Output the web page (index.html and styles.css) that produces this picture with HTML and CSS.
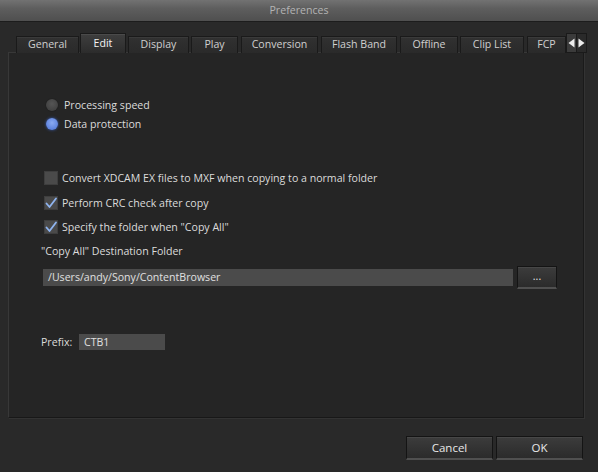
FILE: index.html
```html
<!DOCTYPE html>
<html>
<head>
<meta charset="utf-8">
<link rel="stylesheet" href="styles.css">
</head>
<body>
<div class="window">
  <div class="titlebar">Preferences</div>
  <div class="content">
    <div class="tabs">
      <div class="tab t-general">General</div>
      <div class="tab t-edit active">Edit</div>
      <div class="tab t-display">Display</div>
      <div class="tab t-play">Play</div>
      <div class="tab t-conv">Conversion</div>
      <div class="tab t-flash">Flash Band</div>
      <div class="tab t-off">Offline</div>
      <div class="tab t-clip">Clip List</div>
      <div class="tab t-fcp">FCP</div>
      <div class="arrows">
        <span class="arr"><svg width="7" height="10" viewBox="0 0 7 10"><path d="M6.5 0.5 L0.5 5 L6.5 9.5 Z" fill="#ececec"/></svg></span>
        <span class="arr"><svg width="7" height="10" viewBox="0 0 7 10"><path d="M0.5 0.5 L6.5 5 L0.5 9.5 Z" fill="#ececec"/></svg></span>
      </div>
    </div>
    <div class="panel">
      <div class="radios">
        <div class="row"><span class="radio"></span><span class="lbl">Processing speed</span></div>
        <div class="row"><span class="radio on"></span><span class="lbl">Data protection</span></div>
      </div>
      <div class="checks">
        <div class="row"><span class="cb"></span><span class="lbl">Convert XDCAM EX files to MXF when copying to a normal folder</span></div>
        <div class="row"><span class="cb"><svg width="14" height="14" viewBox="0 0 14 14"><path d="M2.5 7.5 L5.5 11 L12 2.5" fill="none" stroke="#8fb4f0" stroke-width="1.8" stroke-linecap="round" stroke-linejoin="round"/></svg></span><span class="lbl">Perform CRC check after copy</span></div>
        <div class="row"><span class="cb"><svg width="14" height="14" viewBox="0 0 14 14"><path d="M2.5 7.5 L5.5 11 L12 2.5" fill="none" stroke="#8fb4f0" stroke-width="1.8" stroke-linecap="round" stroke-linejoin="round"/></svg></span><span class="lbl">Specify the folder when "Copy All"</span></div>
      </div>
      <div class="dest-label">"Copy All" Destination Folder</div>
      <div class="dest-row">
        <div class="field path">/Users/andy/Sony/ContentBrowser</div>
        <div class="btn dots">...</div>
      </div>
      <div class="prefix-row">
        <span class="plabel">Prefix:</span>
        <div class="field prefix">CTB1</div>
      </div>
    </div>
    <div class="footer">
      <div class="btn big">Cancel</div>
      <div class="btn big">OK</div>
    </div>
  </div>
</div>
</body>
</html>
```

FILE: styles.css
```css
html, body {
  margin: 0;
  padding: 0;
}
body {
  width: 598px;
  height: 472px;
  background: #292929;
  font-family: "Open Sans", "DejaVu Sans", sans-serif;
  font-size: 10.6px;
  color: #dcdcdc;
  overflow: hidden;
}
.window {
  display: flex;
  flex-direction: column;
  height: 472px;
}
.titlebar {
  height: 21px;
  line-height: 21px;
  text-align: center;
  color: #b4b4b4;
  font-size: 10.6px;
  background: linear-gradient(#727272, #5e5e5e 40%, #4f4f4f);
  border-bottom: 1px solid #1c1c1c;
}
.content {
  padding: 0 14px 0 8px;
  display: flex;
  flex-direction: column;
}
.tabs {
  display: flex;
  align-items: flex-end;
  height: 31px;
  padding-left: 8px;
  position: relative;
  z-index: 2;
  margin-bottom: -1px;
}
.tab {
  box-sizing: border-box;
  height: 17px;
  line-height: 15px;
  text-align: center;
  color: #d0d0d0;
  background: linear-gradient(#313131, #2a2a2a);
  border: 1px solid #1a1a1a;
  border-bottom: none;
  box-shadow: inset 0 1px 0 #3a3a3a;
  flex: none;
}
.tab.active {
  height: 20px;
  line-height: 18px;
  color: #f4f4f4;
  background: linear-gradient(#3e3e3e, #2c2c2c);
  box-shadow: inset 0 1px 0 #4a4a4a;
}
.t-general { width: 63px; }
.t-edit { width: 46px; margin-left: 1px; }
.t-display { width: 61px; margin-left: 2px; }
.t-play { width: 47px; margin-left: 2px; }
.t-conv { width: 77px; margin-left: 3px; }
.t-flash { width: 76px; margin-left: 3px; }
.t-off { width: 58px; margin-left: 3px; }
.t-clip { width: 64px; margin-left: 2px; }
.t-fcp { width: 39px; margin-left: 3px; }
.arrows {
  display: flex;
  flex: none;
  height: 20px;
  margin-bottom: 0;
}
.arr {
  width: 11px;
  height: 20px;
  box-sizing: border-box;
  display: flex;
  align-items: center;
  justify-content: center;
  background: #3b3b3b;
  border: 1px solid #1a1a1a;
}
.arr + .arr {
  width: 10px;
  background: #2a2a2a;
  border-left: none;
}
.panel {
  height: 366px;
  background: #252525;
  border: 1px solid #383838;
  border-right-color: #1a1a1a;
  border-bottom-color: #181818;
  box-shadow: 1px 1px 0 #333;
  box-sizing: border-box;
  padding-left: 35px;
  display: flex;
  flex-direction: column;
}
.row {
  display: flex;
  align-items: center;
}
.radios {
  margin-top: 42px;
  padding-left: 2px;
}
.radios .row {
  height: 19px;
}
.radio {
  width: 12px;
  height: 12px;
  border-radius: 50%;
  background: radial-gradient(circle at 50% 40%, #555, #3a3a3a);
  box-shadow: 0 0 1px #111;
  margin-right: 6px;
}
.radio.on {
  background: radial-gradient(circle at 50% 40%, #8aaaf2, #4a72d6);
  box-shadow: 0 0 3px #3a5fb8;
}
.checks {
  margin-top: 33px;
}
.checks .row {
  height: 24.5px;
}
.cb {
  width: 14px;
  height: 14px;
  background: #4a4a4a;
  border: 1px solid #3e3e3e;
  box-sizing: border-box;
  margin-right: 4px;
  display: flex;
}
.cb svg { margin: -1px; }
.dest-label {
  margin-top: 3.5px;
  height: 16px;
  line-height: 16px;
  margin-left: -3px;
}
.dest-row {
  display: flex;
  align-items: center;
  margin-top: 7px;
  margin-left: -1px;
}
.field {
  background: #4b4b4b;
  color: #e0e0e0;
  height: 17px;
  line-height: 17px;
  padding-left: 5px;
  box-sizing: border-box;
}
.path {
  width: 470px;
}
.btn {
  background: linear-gradient(#3c3c3c, #2b2b2b);
  border: 1px solid #141414;
  border-bottom: 2px solid #505050;
  box-shadow: inset 0 1px 0 #474747;
  box-sizing: border-box;
  color: #e8e8e8;
  text-align: center;
}
.dots {
  width: 40px;
  height: 23px;
  line-height: 18px;
  margin-left: 4px;
}
.prefix-row {
  display: flex;
  align-items: center;
  margin-top: 45px;
  margin-left: -3px;
}
.plabel {
  width: 38px;
}
.prefix {
  width: 86px;
  height: 16px;
  line-height: 16px;
}
.footer {
  display: flex;
  justify-content: flex-end;
  gap: 3px;
  margin-top: 18px;
  padding-right: 1px;
}
.big {
  width: 87px;
  height: 24px;
  line-height: 21px;
  font-size: 11.5px;
}
```
